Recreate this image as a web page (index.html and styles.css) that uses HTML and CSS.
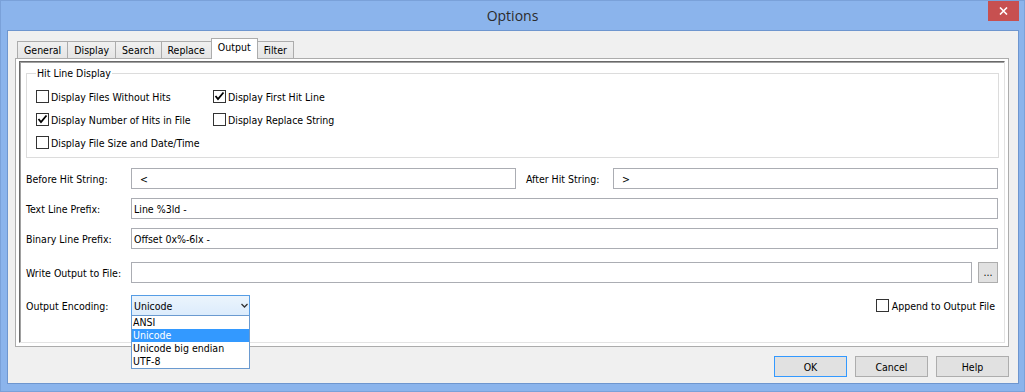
FILE: index.html
```html
<!DOCTYPE html>
<html lang="en">
<head>
  <meta charset="UTF-8">
  <title>Options</title>
  <link rel="stylesheet" href="styles.css">
</head>
<body>
  <div class="window">
    <div class="titlebar">
      <span></span>
      <span class="title">Options</span>
      <button class="close" aria-label="Close">
        <svg width="9" height="8" viewBox="0 0 9 8"><path d="M1 0.5 L8 7.5 M8 0.5 L1 7.5" stroke="#fff" stroke-width="1.6"/></svg>
      </button>
    </div>

    <div class="client">
      <div class="tabs">
        <span class="tab">General</span>
        <span class="tab">Display</span>
        <span class="tab">Search</span>
        <span class="tab">Replace</span>
        <span class="tab active">Output</span>
        <span class="tab">Filter</span>
      </div>

      <div class="page">
        <div class="pane">
          <fieldset class="group">
            <legend>Hit Line Display</legend>
            <div class="checks">
              <label class="check"><span class="box"></span>Display Files Without Hits</label>
              <label class="check"><span class="box"><svg width="11" height="11" viewBox="0 0 11 11"><path d="M1.5 5 L4 8 L9.5 1.5" fill="none" stroke="#000" stroke-width="1.8"/></svg></span>Display First Hit Line</label>
              <label class="check"><span class="box"><svg width="11" height="11" viewBox="0 0 11 11"><path d="M1.5 5 L4 8 L9.5 1.5" fill="none" stroke="#000" stroke-width="1.8"/></svg></span>Display Number of Hits in File</label>
              <label class="check"><span class="box"></span>Display Replace String</label>
              <label class="check"><span class="box"></span>Display File Size and Date/Time</label>
            </div>
          </fieldset>

          <div class="row row-top">
            <span class="lbl">Before Hit String:</span>
            <input class="field" type="text" value="  &lt;">
            <span class="lbl after">After Hit String:</span>
            <input class="field" type="text" value="  &gt;">
          </div>
          <div class="row">
            <span class="lbl">Text Line Prefix:</span>
            <input class="field" type="text" value="Line %3ld -">
          </div>
          <div class="row">
            <span class="lbl">Binary Line Prefix:</span>
            <input class="field" type="text" value="Offset 0x%-6lx -">
          </div>
          <div class="row row-wide">
            <span class="lbl">Write Output to File:</span>
            <input class="field" type="text" value="">
            <button class="browse">...</button>
          </div>
          <div class="row row-wide2">
            <span class="lbl">Output Encoding:</span>
            <div class="combo">
              <span>Unicode</span>
              <svg width="7" height="5" viewBox="0 0 7 5"><path d="M0.5 1 L3.5 4 L6.5 1" fill="none" stroke="#333" stroke-width="1.3"/></svg>
              <div class="list">
                <div class="item">ANSI</div>
                <div class="item sel">Unicode</div>
                <div class="item">Unicode big endian</div>
                <div class="item">UTF-8</div>
              </div>
            </div>
            <label class="check append"><span class="box"></span>Append to Output File</label>
          </div>
        </div>
      </div>

      <div class="buttons">
        <button class="btn default">OK</button>
        <button class="btn">Cancel</button>
        <button class="btn">Help</button>
      </div>
    </div>
  </div>
</body>
</html>
```

FILE: styles.css
```css
body {
  margin: 0;
  background: #8bb4ec;
  font-family: "DejaVu Sans Condensed", "Liberation Sans", Arial, sans-serif;
  font-size: 10.5px;
  color: #000;
}

.window {
  height: 392px;
  box-sizing: border-box;
  border: 1px solid #7aa1d9;
  display: flex;
  flex-direction: column;
}

/* title bar */
.titlebar {
  height: 29px;
  flex: none;
  display: grid;
  grid-template-columns: 1fr auto 1fr;
  align-items: center;
}

.title {
  font-family: "Open Sans", "Noto Sans", sans-serif;
  font-size: 14px;
  color: #2b2b2b;
}

.close {
  justify-self: end;
  align-self: start;
  margin-right: 5px;
  width: 31px;
  height: 20px;
  border: 0;
  padding: 0;
  background: #c75050;
  display: flex;
  align-items: center;
  justify-content: center;
}

/* dialog body */
.client {
  flex: 1;
  min-height: 0;
  margin: 0 5px 7px 6px;
  border: 1px solid #6e96cf;
  background: #f0f0f0;
  padding: 7px 9px 6px 7px;
  display: flex;
  flex-direction: column;
}

.tabs {
  display: flex;
  align-items: flex-end;
  height: 20px;
  margin-left: 2px;
  position: relative;
  z-index: 1;
}

.tab {
  height: 17px;
  box-sizing: border-box;
  border: 1px solid #acacac;
  border-bottom: 0;
  margin-right: -1px;
  padding: 0 6px;
  line-height: 16px;
  background: linear-gradient(#f0f0f0, #e5e5e5);
}

.tab.active {
  height: 21px;
  margin-bottom: -1px;
  line-height: 17px;
  background: #fff;
  position: relative;
  z-index: 1;
}

.page {
  flex: 1;
  min-height: 0;
  border: 1px solid #acacac;
  background: #fff;
  padding: 2px 3px 3px 3px;
  display: flex;
  flex-direction: column;
}

.pane {
  flex: 1;
  border: 1px solid;
  border-color: #696969 #e3e3e3 #e3e3e3 #696969;
  box-shadow: inset 1px 1px 0 #a0a0a0;
  padding: 5px 6px 0 6px;
  background: #fff;
}

/* group box */
.group {
  margin: 0 -1px 0 0;
  padding: 6px 9px 4px 9px;
  border: 1px solid #dcdcdc;
  min-inline-size: 0;
}

.group legend {
  padding: 0 1px;
  line-height: 13px;
}

.checks {
  display: grid;
  grid-template-columns: 177px auto;
  grid-auto-rows: 21px;
  row-gap: 2px;
}

.check {
  display: flex;
  align-items: center;
  gap: 2px;
  white-space: nowrap;
}

.box {
  width: 13px;
  height: 13px;
  flex: none;
  box-sizing: border-box;
  border: 1px solid #333;
  background: #fff;
  display: flex;
}

/* form rows */
.row {
  display: flex;
  align-items: center;
  height: 21px;
  margin-top: 9px;
}

.row-top {
  margin-top: 10px;
}

.row-wide {
  margin-top: 13px;
}

.row-wide2 {
  margin-top: 12px;
}

.lbl {
  width: 105px;
  flex: none;
  white-space: nowrap;
}

.lbl.after {
  width: 87px;
  margin-left: 10px;
}

.field {
  flex: 1;
  min-width: 0;
  height: 21px;
  box-sizing: border-box;
  margin: 0;
  border: 1px solid #abadb3;
  padding: 0 2px;
  font: inherit;
  color: #000;
  background: #fff;
  outline: none;
}

.browse {
  width: 20px;
  height: 21px;
  margin-left: 6px;
  padding: 0 0 2px;
  border: 1px solid #adadad;
  background: #e1e1e1;
  font: inherit;
  color: #000;
}

.combo {
  position: relative;
  width: 119px;
  height: 21px;
  box-sizing: border-box;
  border: 1px solid #569de5;
  background: linear-gradient(#ebf4fc, #dcecfc);
  padding: 0 1px 0 2px;
  display: flex;
  align-items: center;
  justify-content: space-between;
}

.list {
  position: absolute;
  left: -1px;
  top: 19px;
  width: 119px;
  box-sizing: border-box;
  border: 1px solid #6a9ad0;
  background: #fff;
  z-index: 2;
}

.item {
  height: 13px;
  line-height: 13px;
  padding-left: 1px;
  white-space: nowrap;
}

.item.sel {
  background: #3399ff;
  color: #fff;
}

.append {
  margin-left: auto;
  margin-right: 3px;
  gap: 3px;
}

/* bottom buttons */
.buttons {
  display: flex;
  justify-content: flex-end;
  gap: 8px;
  margin-top: 9px;
}

.btn {
  width: 73px;
  height: 21px;
  box-sizing: border-box;
  border: 1px solid #adadad;
  background: #e1e1e1;
  font: inherit;
  color: #000;
  padding: 0;
}

.btn.default {
  border-color: #3399ff;
}
```
